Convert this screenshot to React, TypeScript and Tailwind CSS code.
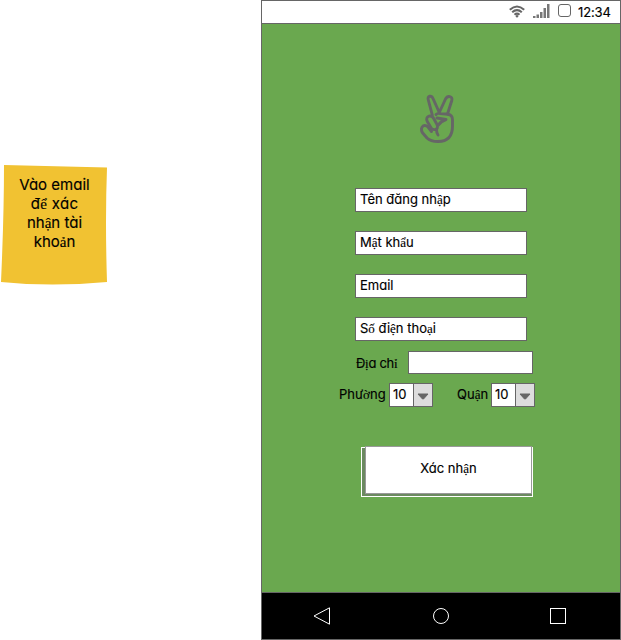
import React from "react";

const SERIF_GLYPHS = "ểậảẩốệạỉờị";
const SINGLE_A =
  "[font-family:Inter,sans-serif] [font-feature-settings:'cv11'_1,'calt'_0] [-webkit-text-stroke:0.15px_black]";

function Label({ text, className = "" }: { text: string; className?: string }) {
  return (
    <span className={`block whitespace-nowrap ${SINGLE_A} ${className}`}>
      {Array.from(text).map((c, i) =>
        SERIF_GLYPHS.includes(c) ? (
          <span key={i} className="leading-none [font-family:'Liberation_Serif',serif]">{c}</span>
        ) : (
          c
        ),
      )}
    </span>
  );
}

function Field({ text }: { text: string }) {
  return (
    <div className="h-6 w-[172px] border border-[#666] bg-white pl-1">
      <Label text={text} className="text-[13px] leading-[21px]" />
    </div>
  );
}

function Select() {
  return (
    <div className="flex h-6 w-11 border border-[#666] bg-white">
      <div className="w-[23px] pl-[3px]"><Label text="10" className="text-[13px] leading-[21px]" /></div>
      <div className="flex flex-1 items-center justify-center border-l border-[#666] bg-[#ddd]">
        <svg width="12" height="7" className="mt-0.5"><path d="M1 1H11L6.500 6H5.500Z" fill="#666" stroke="#666" strokeLinejoin="round" /></svg>
      </div>
    </div>
  );
}

function Peace() {
  return (
    <svg width="42" height="54" viewBox="0 0 42 54" fill="none" stroke="#666" strokeWidth="2.9" strokeLinecap="round" strokeLinejoin="round">
      <path d="M16.300 23 L12.300 8 C11 3.500 15.500 3 17 6.500 L23.300 20.500 L29.500 7 C31.500 3 37 4 35.800 8.500 L31.500 22" />
      <path d="M20 22.500 Q21.500 21 24 21.500 L32 22.300 Q36.500 23 36.500 28 V34 Q36.500 49.500 22 49.500 Q14.500 49.500 11 46 L6.300 40.500 Q4.300 36.500 7 34 Q9.500 32.500 12 35 L15.500 39.500" />
      <path d="M15.500 36.500 L11.300 29.500 Q9.500 25.500 13 24.200 Q16 23.500 18 27 L21 32.500 Q22.500 36.500 19.500 37.500 Q17 38 15.500 36.500" />
      <path d="M21 26 L30 27.500 Q25 29 22.500 33 M20.500 37.500 Q20.500 41 22 43" />
    </svg>
  );
}

export default function App() {
  return (
    <main className="flex h-[640px] w-[621px] overflow-hidden bg-white text-black">
      <aside className="w-[261px] pt-[165px]">
        <div className="relative ml-px h-[121px] w-[107px]">
          <svg className="absolute inset-0" width="107" height="121"><path d="M3 0L106 2.500Q104 55 106 117Q50 122 0 117Q3 50 3 0Z" fill="#f1c232" /></svg>
          <div className="relative flex flex-col items-center pt-2.5">
            <Label text="Vào email" className="h-[19px] text-[15px] leading-[19px]" />
            <Label text="để xác" className="h-[19px] text-[15px] leading-[19px] tracking-[0.3px]" />
            <Label text="nhận tài" className="h-[19px] text-[15px] leading-[19px]" />
            <Label text="khoản" className="h-[19px] text-[15px] leading-[19px]" />
          </div>
        </div>
      </aside>
      <section className="flex h-[640px] w-[360px] flex-col border border-[#666] bg-[#6aa84f]">
        <header className="flex h-[23px] shrink-0 items-start border-b border-[#666] bg-white pl-[247px]">
          <svg width="16" height="13" viewBox="0 0 16 13" className="mt-1" fill="none" stroke="#666" strokeWidth="2.1">
            <path d="M.8 4.700Q8-1.700 15.200 4.700M3.200 7.300Q8 3 12.800 7.300M5.500 9.700Q8 7.500 10.500 9.700" /><circle cx="8" cy="11.200" r="1.200" fill="#666" stroke="none" />
          </svg>
          <svg width="17" height="15" className="mt-[3px] ml-2" fill="#777"><path d="M0 12h2.500v2H0zM3.500 10.500H6V14H3.500zM7 8h2.500v6H7zM10.500 4H13v10h-2.500zM14 0h2.500v14H14z" /></svg>
          <div className="mt-[3px] ml-2 size-[13px] rounded-[3px] border-[1.5px] border-[#666]" />
          <Label text="12:34" className="ml-[7px] text-[13px] leading-[22px] tracking-[-0.15px]" />
        </header>
        <div className="flex h-[569px] shrink-0 flex-col border-b border-[#666]">
          <div className="ml-[154px] h-[122px] pt-[68px]"><Peace /></div>
          <div className="mt-[42px] ml-[93px] flex flex-col gap-[19px]">
            <Field text="Tên đăng nhập" />
            <Field text="Mật khẩu" />
            <Field text="Email" />
            <Field text="Số điện thoại" />
          </div>
          <div className="mt-2.5 ml-[93px] flex h-[23px]">
            <div className="w-[53px] pl-px"><Label text="Địa chỉ" className="text-[13px] leading-6 tracking-[-0.3px]" /></div>
            <div className="h-[23px] w-[125px] border border-[#666] bg-white" />
          </div>
          <div className="mt-[9px] ml-[77px] flex h-6">
            <div className="w-[50px]"><Label text="Phường" className="text-[13px] leading-[23px]" /></div>
            <Select />
            <div className="ml-[24px] w-[34px]"><Label text="Quận" className="text-[13px] leading-[23px]" /></div>
            <Select />
          </div>
          <div className="mt-10 ml-[99px] h-[50px] w-[172px] border border-white bg-[#6b8a60]">
            <button className="-mt-[2px] ml-[3px] flex h-[48px] w-[167px] items-center justify-center border border-[#999] bg-white pb-1">
              <Label text="Xác nhận" className="text-[13px] leading-5" />
            </button>
          </div>
        </div>
        <nav className="flex h-[46px] shrink-0 items-center bg-black pl-[51px]">
          <svg width="254" height="18" fill="none" stroke="white" strokeWidth="1"><path d="M1 9L16.500 .8V17.200Z" /><circle cx="128" cy="9" r="7.500" /><rect x="237.500" y="1.500" width="15" height="15" /></svg>
        </nav>
      </section>
    </main>
  );
}
